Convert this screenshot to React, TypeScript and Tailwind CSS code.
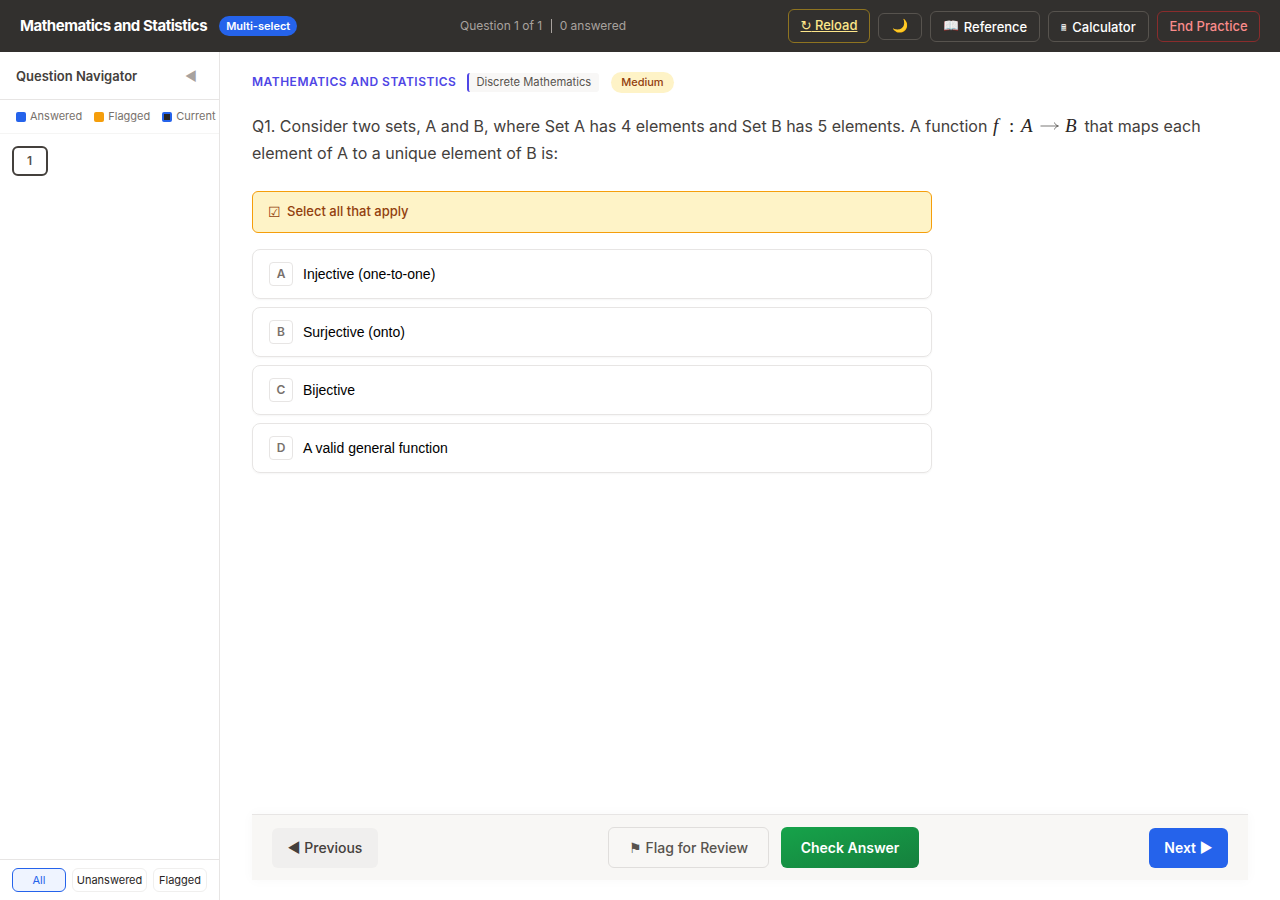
import React from 'react';

const OPTIONS = [
  { key: 'A', text: 'Injective (one-to-one)' },
  { key: 'B', text: 'Surjective (onto)' },
  { key: 'C', text: 'Bijective' },
  { key: 'D', text: 'A valid general function' },
];

const App: React.FC = () => {
  return (
    <div className="h-[900px] w-[1280px] overflow-hidden flex flex-col bg-white font-['Inter',sans-serif] text-[#292524]">
      {/* Header */}
      <header className="h-[52px] shrink-0 bg-[#32302e] flex items-center justify-between px-5">
        <div className="flex items-center gap-3 w-[278px] whitespace-nowrap">
          <span className="text-[15px] font-bold text-white tracking-[-0.46px]">Mathematics and Statistics</span>
          <span className="h-5 px-[7px] rounded-full bg-[#2563eb] text-white text-[11px] font-semibold flex items-center">Multi-select</span>
        </div>
        <div className="flex items-center text-xs text-[#a8a29e] w-[166px] whitespace-nowrap">
          <span>Question 1 of 1</span>
          <span className="ml-[9px] mr-2 w-px h-[14px] bg-[#a8a29e]"></span>
          <span>0 answered</span>
        </div>
        <div className="flex items-center gap-2 whitespace-nowrap">
          <button className="w-[82px] h-[34px] rounded-md border border-[#8f7420] text-[#fde68a] text-[13px] font-medium underline"><span className="font-['DejaVu_Sans',sans-serif]">↻</span> Reload</button>
          <button className="w-11 h-[27px] rounded-md border border-[#57534e] text-[13px] flex items-center justify-center">🌙</button>
          <button className="w-[110px] h-[31px] rounded-md border border-[#57534e] text-white text-[13px] font-medium flex items-center justify-center gap-[5px]"><span>📖</span><span className="pt-[3px]">Reference</span></button>
          <button className="w-[101px] h-[31px] rounded-md border border-[#57534e] text-white text-[13px] font-medium flex items-center justify-center gap-[6px]"><span className="text-[9px] pt-[3px]">🖩</span><span className="pt-[3px]">Calculator</span></button>
          <button className="w-[103px] h-[31px] pt-px rounded-md border border-[#8a2c2c] text-[#f98b8b] text-[13px] font-medium">End Practice</button>
        </div>
      </header>

      <div className="flex-1 flex min-h-0">
        {/* Sidebar */}
        <aside className="w-[220px] shrink-0 border-r border-[#e7e5e4] flex flex-col">
          <div className="h-[48px] shrink-0 pt-[2px] flex items-center justify-between pl-4 pr-[22px] border-b border-[#e7e5e4]">
            <span className="text-[13px] font-semibold text-[#44403c]">Question Navigator</span>
            <span className="text-[13px] text-[#a8a29e]">◀</span>
          </div>
          <div className="h-[34px] shrink-0 flex items-center gap-3 pl-4 border-b border-[#f5f5f4] text-[11px] text-[#78716c] whitespace-nowrap">
            <span className="flex items-center gap-[4px]"><span className="w-[10px] h-[10px] rounded-[2px] bg-[#2563eb]"></span>Answered</span>
            <span className="flex items-center gap-[4px]"><span className="w-[10px] h-[10px] rounded-[2px] bg-[#f59e0b]"></span>Flagged</span>
            <span className="flex items-center gap-[4px]"><span className="w-[10px] h-[10px] rounded-[2px] bg-[#292524] border-2 border-[#2563eb]"></span>Current</span>
          </div>
          <div className="flex-1 pl-3 pt-3">
            <div className="w-9 h-[30px] rounded-md border-2 border-[#44403c] text-xs font-semibold text-[#57534e] flex items-center justify-center pr-px">1</div>
          </div>
          <div className="h-[41px] shrink-0 border-t border-[#e7e5e4] flex items-center gap-[6px] pl-3 text-[11px]">
            <button className="w-[54px] h-6 rounded-md border border-[#2563eb] bg-[#eff4ff] text-[#2563eb]">All</button>
            <button className="w-[75px] h-6 rounded-md border border-[#f0efee] text-[#292524]">Unanswered</button>
            <button className="w-[54px] h-6 rounded-md border border-[#f0efee] text-[#292524]">Flagged</button>
          </div>
        </aside>

        {/* Main */}
        <main className="flex-1 flex flex-col min-w-0 pl-8 pr-8">
          <div className="flex-1 min-h-0 pt-5">
            <div className="flex items-center h-[21px] whitespace-nowrap">
              <span className="pb-px text-xs font-semibold tracking-[0.5px] text-[#4f46e5] uppercase">Mathematics and Statistics</span>
              <span className="ml-[11px] h-[19px] pl-[7px] pr-2 bg-[#f8f7f6] border-l-2 border-[#4f46e5] rounded-[3px] text-[11.2px] text-[#57534e] flex items-center">Discrete Mathematics</span>
              <span className="ml-3 h-[21px] px-[10px] rounded-full bg-[#fef3c7] text-[#92400e] text-[11px] font-medium flex items-center">Medium</span>
            </div>
            <p className="mt-5 text-base leading-[27px] text-[#44403c]">
              Q1. Consider two sets, A and B, where Set A has 4 elements and Set B has 5 elements. A function{' '}
              <span className="inline-flex items-baseline leading-none font-['Liberation_Serif',serif] text-[19px] text-[#292524] ml-px">
                <i className="w-[10px]">f</i>
                <span className="ml-[6px] w-[5px]">:</span>
                <i className="ml-[7px] w-[13px]">A</i>
                <svg className="ml-[6px] self-center text-[#44403c]" width="19" height="10" viewBox="0 0 19 10" fill="none" stroke="currentColor" strokeWidth="0.7">
                  <path d="M0.5 5H18" />
                  <path d="M14.5 1.5C15 3.5 16.5 4.5 18.5 5C16.5 5.5 15 6.5 14.5 8.5" />
                </svg>
                <i className="ml-[6px] w-[15px]">B</i>
              </span>{' '}
              that maps each element of A to a unique element of B is:
            </p>
            <div className="mt-6 w-[680px] h-[42px] rounded-md border border-[#f59e0b] bg-[#fef3c7] flex items-center pl-[15px] gap-[6px] text-[#92400e]">
              <span className="text-sm font-['Liberation_Sans',sans-serif]">☑</span>
              <span className="text-[13px] font-medium">Select all that apply</span>
            </div>
            <div className="mt-4 w-[680px] flex flex-col gap-2">
              {OPTIONS.map(o => (
                <div key={o.key} className="h-[50px] rounded-lg border border-[#e7e5e4] shadow-[0_1px_2px_rgba(0,0,0,0.04)] flex items-center pl-4 gap-[10px]">
                  <span className="w-6 h-6 rounded border border-[#e7e5e4] text-xs font-semibold text-[#78716c] flex items-center justify-center">{o.key}</span>
                  <span className="font-['Liberation_Sans',sans-serif] text-sm text-black">{o.text}</span>
                </div>
              ))}
            </div>
          </div>

          {/* Footer actions */}
          <div className="h-[66px] shrink-0 mb-5 border-t border-[#e7e5e4] bg-[#f8f7f5] shadow-[0_0_12px_rgba(0,0,0,0.03)] flex items-center justify-between px-5">
            <button className="w-[106px] h-10 mt-px rounded-md bg-[#f0efee] text-sm font-medium text-[#44403c]">◀ Previous</button>
            <div className="flex items-center gap-3">
              <button className="w-[161px] h-[41px] rounded-md border border-[#e0dedc] text-sm font-medium text-[#57534e]">⚑ Flag for Review</button>
              <button className="w-[138px] h-[41px] rounded-md bg-gradient-to-br from-[#16a34a] to-[#15803d] text-sm font-semibold text-white">Check Answer</button>
            </div>
            <button className="w-[79px] h-10 mt-px rounded-md bg-[#2563eb] text-sm font-semibold text-white">Next ▶</button>
          </div>
        </main>
      </div>
    </div>
  );
};

export default App;
